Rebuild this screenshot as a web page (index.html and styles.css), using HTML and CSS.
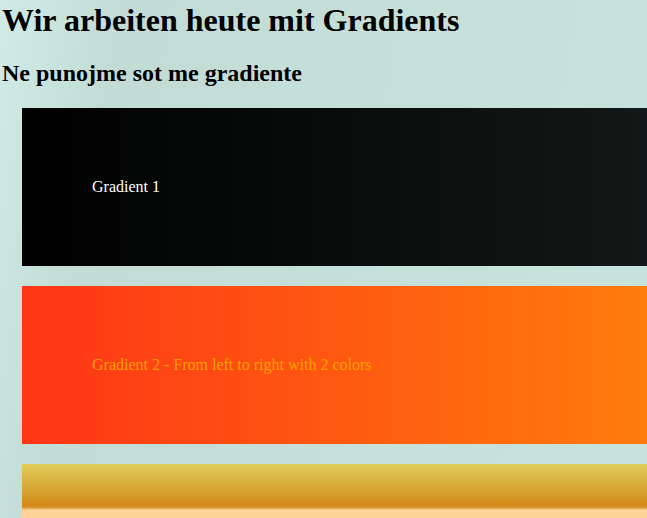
FILE: index.html
```html
<!DOCTYPE html>
<html>
<head>
<meta charset="utf-8">
<link rel="stylesheet" href="styles.css">
</head>
<body>
<h1 class="title">Wir arbeiten heute mit Gradients</h1>
<h2 class="subtitle">Ne punojme sot me gradiente</h2>
<div class="box box-1">Gradient 1</div>
<div class="box box-2">Gradient 2 - From left to right with 2 colors</div>
<div class="box box-3"></div>
</body>
</html>
```
FILE: styles.css
```css
html {
  overflow: hidden;
}
body {
  margin: 0;
  height: 518px;
  overflow: hidden;
  font-family: "Liberation Serif", "Times New Roman", serif;
  background: linear-gradient(100deg, #d0ebe6 0%, #c2dcd5 17%, #c5dfd9 55%, #c8e3dc 100%);
}
.title {
  font-size: 32px;
  margin: 2px 0 21px 2px;
  color: #000;
}
.subtitle {
  font-size: 24px;
  margin: 21px 0 21px 2px;
  color: #000;
}
.box {
  margin: 0 0 20px 22px;
  padding: 70px;
  font-size: 16px;
  line-height: 18px;
}
.box-1 {
  color: #fff;
  background: linear-gradient(to right, #000000, #121817);
}
.box-2 {
  color: #ffa000;
  background: linear-gradient(to right, #ff3516, #ff7c0c);
}
.box-3 {
  height: 18px;
  background: linear-gradient(to bottom, #e1cd5a 0px, #d9ab3a 22px, #d38814 42px, #e0a040 44px, #ffd398 46px, #ffd398 100%);
}
```
